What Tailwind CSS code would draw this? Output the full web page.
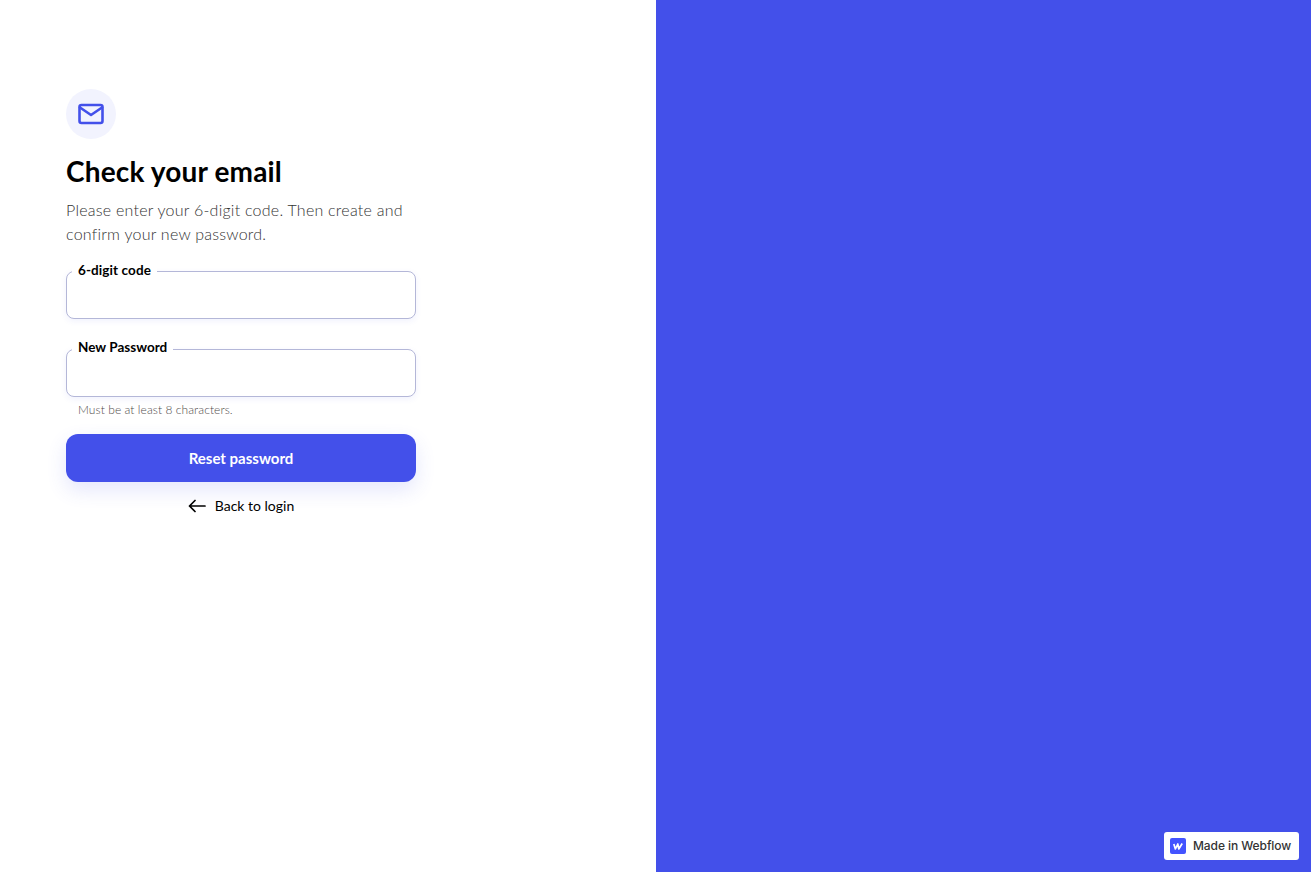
<!DOCTYPE html>
<html lang="en">
<head>
    <meta charset="UTF-8">
    <meta name="viewport" content="width=device-width, initial-scale=1.0">
    <title>Check your email</title>
    <script src="https://cdn.jsdelivr.net/npm/@tailwindcss/browser@4"></script>
</head>
<body class="bg-white text-black font-['Lato',sans-serif] antialiased">
    <main class="flex h-[872px] w-full overflow-hidden">
        <!-- Form side -->
        <section class="w-[656px] pl-[66px] pt-[89px]">
            <div class="w-[350px]">
                <div class="flex h-[50px] w-[50px] items-center justify-center rounded-full bg-[#f2f3fe]">
                    <svg width="28" height="28" viewBox="0 0 28 28" fill="none" stroke="#4350ea" stroke-width="2.6" stroke-linejoin="round" stroke-linecap="round">
                        <rect x="2.5" y="5" width="23" height="18" rx="2"></rect>
                        <path d="M3 7.5l11 7.5 11-7.5"></path>
                    </svg>
                </div>

                <h1 class="mt-[14px] text-[28px] leading-[36px] font-bold tracking-[0.16px]">Check your email</h1>
                <p class="mt-[9px] text-[16px] leading-[24px] font-light text-[#333] tracking-[0.24px]">Please enter your 6-digit code. Then create and confirm your new password.</p>

                <div class="relative mt-[25px] h-[48px] rounded-[8px] border border-[#b4b7d8] bg-white shadow-[0_2px_6px_rgba(67,80,234,0.08)]">
                    <label for="code" class="absolute -top-[11px] left-[5px] bg-white px-[6px] text-[13.5px] leading-[18px] font-bold tracking-[0.1px]">6-digit code</label>
                    <input id="code" type="text" class="h-full w-full rounded-[8px] px-[12px] outline-none">
                </div>

                <div class="relative mt-[30px] h-[48px] rounded-[8px] border border-[#b4b7d8] bg-white shadow-[0_2px_6px_rgba(67,80,234,0.08)]">
                    <label for="password" class="absolute -top-[12px] left-[5px] bg-white px-[6px] text-[13.5px] leading-[18px] font-bold tracking-[0.02px]">New Password</label>
                    <input id="password" type="password" class="h-full w-full rounded-[8px] px-[12px] outline-none">
                </div>
                <p class="mt-[5px] pl-[12px] text-[12px] leading-[16px] font-light text-[#4f4a4a] tracking-[0.07px]">Must be at least 8 characters.</p>

                <button class="mt-[16px] h-[48px] w-full rounded-[12px] bg-[#4350ea] text-[15px] font-bold text-white shadow-[0_8px_20px_rgba(67,80,234,0.14)]">Reset password</button>

                <a href="#" class="mt-[14px] flex items-center justify-center gap-[9px] text-[14px] leading-[20px] text-black">
                    <svg width="18" height="14" viewBox="0 0 18 14" fill="none" stroke="#000" stroke-width="1.7" stroke-linecap="round" stroke-linejoin="round">
                        <path d="M1.5 7h15.5M7 1.5L1.5 7 7 12.5"></path>
                    </svg>
                    Back to login
                </a>
            </div>
        </section>

        <!-- Blue panel -->
        <section class="relative flex-1 bg-[#4350ea]">
            <a href="#" class="absolute right-[12px] bottom-[12px] flex h-[28px] w-[135px] items-center gap-[7px] rounded-[3px] bg-white pl-[6px] font-['Inter',sans-serif] text-[12px] tracking-[-0.08px] font-medium text-[#333]">
                <span class="flex h-[16px] w-[16px] items-center justify-center rounded-[2px] bg-[#4353ff]">
                    <svg width="10" height="7" viewBox="0 0 10 7" fill="none" stroke="#fff" stroke-width="1.7" stroke-linejoin="round">
                        <path d="M0.8 1l1.6 5 2.4-5 1 5 3.4-5.5"></path>
                    </svg>
                </span>
                Made in Webflow
            </a>
        </section>
    </main>
</body>
</html>
